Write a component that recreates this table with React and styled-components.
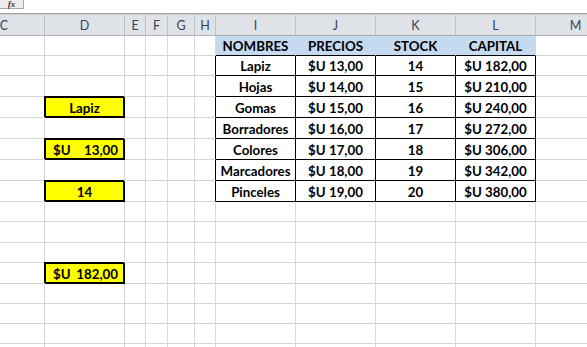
import React from 'react';
import styled, { createGlobalStyle, css } from 'styled-components';

const GlobalStyle = createGlobalStyle`
  html, body { margin: 0; padding: 0; background: #fff; overflow: hidden; }
  body { font-family: Lato, "Open Sans", sans-serif; }
  * { box-sizing: border-box; }
`;

const COL_WIDTHS = [45, 80, 21, 22, 27, 21, 80, 80, 80, 80, 80];
const COL_NAMES = ['C', 'D', 'E', 'F', 'G', 'H', 'I', 'J', 'K', 'L', 'M'];
const ROW_HEIGHTS = [20, 20, 21, 21, 21, 21, 21, 21, 20, 21, 20, 21, 20, 20, 20, 20];

const GRID = '#d6d6d6';
const BLACK = '#000';
const BLUE = '#c5d9f1';
const YELLOW = '#ffff00';

const HEADERS = ['NOMBRES', 'PRECIOS', 'STOCK', 'CAPITAL'];
const PRODUCTS = [
  ['Lapiz', '$U 13,00', '14', '$U 182,00'],
  ['Hojas', '$U 14,00', '15', '$U 210,00'],
  ['Gomas', '$U 15,00', '16', '$U 240,00'],
  ['Borradores', '$U 16,00', '17', '$U 272,00'],
  ['Colores', '$U 17,00', '18', '$U 306,00'],
  ['Marcadores', '$U 18,00', '19', '$U 342,00'],
  ['Pinceles', '$U 19,00', '20', '$U 380,00'],
];

const LOOKUPS = {
  3: { text: 'Lapiz' },
  5: { acct: ['$U', '13,00'] },
  7: { text: '14' },
  11: { acct: ['$U', '182,00'] },
};

const Sheet = styled.div`
  width: 587px;
  height: 347px;
  overflow: hidden;
  background: #fff;
`;

const FormulaBar = styled.div`
  height: 13px;
  display: flex;
  align-items: flex-start;
`;

const FxBox = styled.div`
  width: 24px;
  height: 9px;
  background: #ececec;
  border-right: 1px solid #a8a8a8;
  border-bottom: 1px solid #a8a8a8;
  display: flex;
  justify-content: center;
  align-items: center;
  font: italic bold 9px "Liberation Serif", serif;
  line-height: 8px;
  color: #3a3a3a;
`;

const Divider = styled.div`
  height: 2px;
  border-top: 1px solid #a2a2a2;
  background: #cdd0d4;
`;

const Grid = styled.div`
  width: max-content;
  display: grid;
  grid-template-columns: ${COL_WIDTHS.map((w) => `${w}px`).join(' ')};
  grid-template-rows: 21px ${ROW_HEIGHTS.map((h) => `${h}px`).join(' ')};
`;

const ColHeader = styled.div`
  background: #dfe3e8;
  border-right: 1px solid #bcc2c9;
  border-bottom: 1px solid #aab0b8;
  display: flex;
  align-items: center;
  justify-content: ${(p) => (p.$clipped ? 'flex-end' : 'center')};
  padding: 1px ${(p) => (p.$clipped ? '36px' : '0')} 0 0;
  font: 400 12.5px Lato, "Open Sans", sans-serif;
  color: #34435a;
  overflow: hidden;
`;

const Cell = styled.div`
  border-right: 1px solid ${(p) => p.$right || GRID};
  border-bottom: 1px solid ${(p) => p.$bottom || GRID};
  background: ${(p) => p.$fill || '#fff'};
  display: flex;
  align-items: center;
  justify-content: center;
  font: 700 13.3px Lato, "Open Sans", sans-serif;
  color: #000;
  white-space: nowrap;
  padding-top: 1px;
  ${(p) =>
    p.$boxed &&
    css`
      background: ${YELLOW};
      border-right-color: ${BLACK};
      border-bottom-color: ${BLACK};
      box-shadow: inset 1px 1px 0 ${BLACK}, inset -1px -1px 0 ${BLACK}, -1px -1px 0 ${BLACK};
    `}
`;

const Acct = styled.div`
  width: 100%;
  display: flex;
  justify-content: space-between;
  padding: 0 6px 0 8px;
`;

function renderCell(r, c) {
  const key = `${r}-${c}`;
  if (r === 0 && c >= 6 && c <= 9) {
    return (
      <Cell key={key} $fill={BLUE} $right={BLUE} $bottom={BLACK}>
        {HEADERS[c - 6]}
      </Cell>
    );
  }
  if (r >= 1 && r <= 7 && c >= 6 && c <= 9) {
    return (
      <Cell key={key} $right={BLACK} $bottom={BLACK}>
        {PRODUCTS[r - 1][c - 6]}
      </Cell>
    );
  }
  if (r >= 1 && r <= 7 && c === 5) {
    return <Cell key={key} $right={BLACK} />;
  }
  if (c === 1 && LOOKUPS[r]) {
    const item = LOOKUPS[r];
    return (
      <Cell key={key} $boxed>
        {item.acct ? (
          <Acct>
            <span>{item.acct[0]}</span>
            <span>{item.acct[1]}</span>
          </Acct>
        ) : (
          item.text
        )}
      </Cell>
    );
  }
  return <Cell key={key} />;
}

export default function App() {
  return (
    <>
      <GlobalStyle />
      <Sheet>
        <FormulaBar>
          <FxBox>fx</FxBox>
        </FormulaBar>
        <Divider />
        <Grid>
          {COL_NAMES.map((n, i) => (
            <ColHeader key={n} $clipped={i === 0}>
              {n}
            </ColHeader>
          ))}
          {ROW_HEIGHTS.map((_, r) => COL_NAMES.map((__, c) => renderCell(r, c)))}
        </Grid>
      </Sheet>
    </>
  );
}
